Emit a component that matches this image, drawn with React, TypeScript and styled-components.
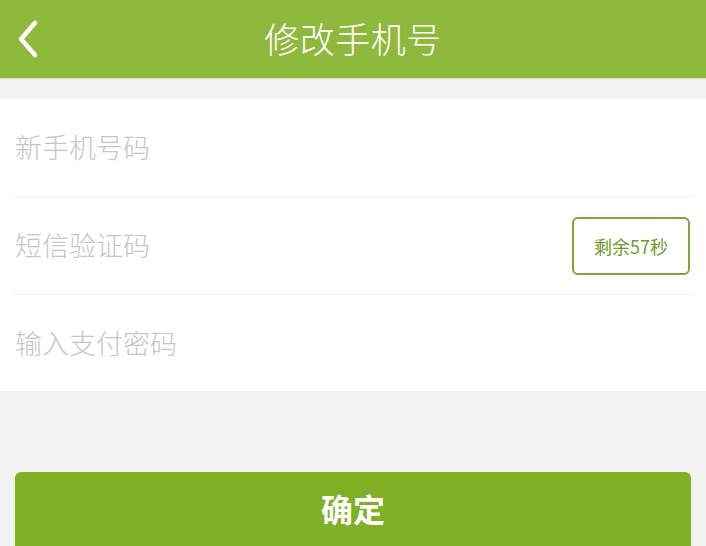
import React from "react";
import styled, { createGlobalStyle } from "styled-components";

const Global = createGlobalStyle`
  html, body { margin: 0; padding: 0; background: #f2f2f2; }
  body { font-family: "Noto Sans CJK SC", "Noto Sans", sans-serif; }
  * { box-sizing: border-box; }
`;

const Page = styled.div`
  width: 706px;
  height: 546px;
  overflow: hidden;
  background: #f2f2f2;
  display: flex;
  flex-direction: column;
  & > * { flex-shrink: 0; }
`;

const Header = styled.header`
  height: 79px;
  background: #8fb93d;
  display: grid;
  grid-template-columns: 60px 1fr 60px;
  align-items: center;
  border-bottom: 1px solid #cfe0b0;
`;

const BackButton = styled.div`
  display: flex;
  align-items: center;
  padding-left: 15px;
  height: 100%;
`;

const Title = styled.h1`
  margin: 0;
  text-align: center;
  color: #ffffff;
  font-size: 35px;
  font-weight: 300;
  letter-spacing: 0.5px;
  line-height: 1;
  padding-bottom: 4px;
`;

const Panel = styled.section`
  margin-top: 20px;
  background: #ffffff;
  display: flex;
  flex-direction: column;
`;

const Row = styled.div<{ $last?: boolean }>`
  height: ${(p) => (p.$last ? 96 : 98)}px;
  margin: 0 14px 0 14px;
  display: flex;
  align-items: center;
  justify-content: space-between;
  border-bottom: ${(p) => (p.$last ? "none" : "1px solid #f0f0f0")};
`;

const Placeholder = styled.span`
  color: #c6c6c6;
  font-size: 27px;
  font-weight: 300;
  line-height: 1;
  padding-left: 1px;
  padding-bottom: 2px;
`;

const CodeButton = styled.div`
  width: 118px;
  height: 58px;
  border: 2px solid #7ea53c;
  border-radius: 6px;
  display: flex;
  align-items: center;
  justify-content: center;
  color: #6f9a2c;
  font-size: 18px;
  margin-right: 2px;
`;

const Actions = styled.div`
  padding: 81px 15px 0 15px;
`;

const Confirm = styled.div`
  height: 90px;
  background: #80b024;
  border-radius: 6px;
  display: flex;
  align-items: flex-start;
  justify-content: center;
  padding-top: 20px;
  color: #ffffff;
  font-size: 32px;
  font-weight: 700;
  line-height: 1;
`;

export default function App() {
  return (
    <>
      <Global />
      <Page>
        <Header>
          <BackButton>
            <svg width="26" height="40" viewBox="0 0 26 40">
              <path
                d="M20 4 L6 20 L20 36"
                fill="none"
                stroke="#ffffff"
                strokeWidth="4.5"
                strokeLinecap="round"
                strokeLinejoin="round"
              />
            </svg>
          </BackButton>
          <Title>修改手机号</Title>
          <div />
        </Header>
        <Panel>
          <Row>
            <Placeholder>新手机号码</Placeholder>
          </Row>
          <Row>
            <Placeholder>短信验证码</Placeholder>
            <CodeButton>剩余57秒</CodeButton>
          </Row>
          <Row $last>
            <Placeholder>输入支付密码</Placeholder>
          </Row>
        </Panel>
        <Actions>
          <Confirm>确定</Confirm>
        </Actions>
      </Page>
    </>
  );
}
